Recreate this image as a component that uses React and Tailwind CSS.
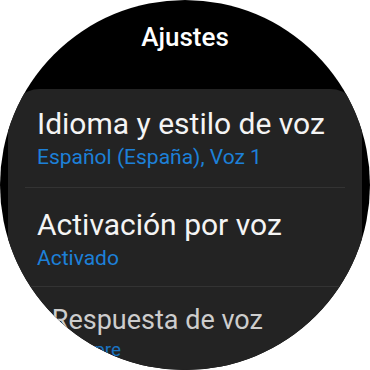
import React from 'react';

const font = { fontFamily: 'Roboto, "Noto Sans", sans-serif' };

const Item = ({ title, value, first, dim }) => (
    <div className={dim ? 'origin-top scale-[0.9] px-[29px] pt-[19px] pb-[15px]' : first ? 'px-[29px] pt-[17px] pb-[17px]' : 'px-[29px] pt-[19px] pb-[15px]'}>
        <div className={`text-[30px] leading-[36px] whitespace-nowrap ${dim ? 'text-[#cdcdcd]' : 'text-[#f4f4f4]'}`}>{title}</div>
        <div className={`mt-[2px] text-[21px] leading-[26px] whitespace-nowrap ${dim ? 'text-[#1a72c0]' : 'text-[#1d80d8]'}`}>{value}</div>
    </div>
);

export default function App() {
    return (
        <div className="w-[370px] h-[370px] bg-white" style={font}>
            <div className="w-full h-full rounded-full bg-black overflow-hidden flex flex-col">
                {/* Header */}
                <div className="pt-[21px] text-center text-white text-[26px] leading-[32px] font-medium">Ajustes</div>

                {/* Settings list */}
                <div className="mt-[36px] mx-[8px] flex-1 rounded-t-[32px] bg-[#232323]">
                    <Item first title="Idioma y estilo de voz" value="Español (España), Voz 1" />
                    <div className="h-px mx-[17px] bg-[#333333]" />
                    <Item title="Activación por voz" value="Activado" />
                    <div className="h-px mx-[17px] bg-[#333333]" />
                    <Item dim title="Respuesta de voz" value="Siempre" />
                </div>
            </div>
        </div>
    );
}
